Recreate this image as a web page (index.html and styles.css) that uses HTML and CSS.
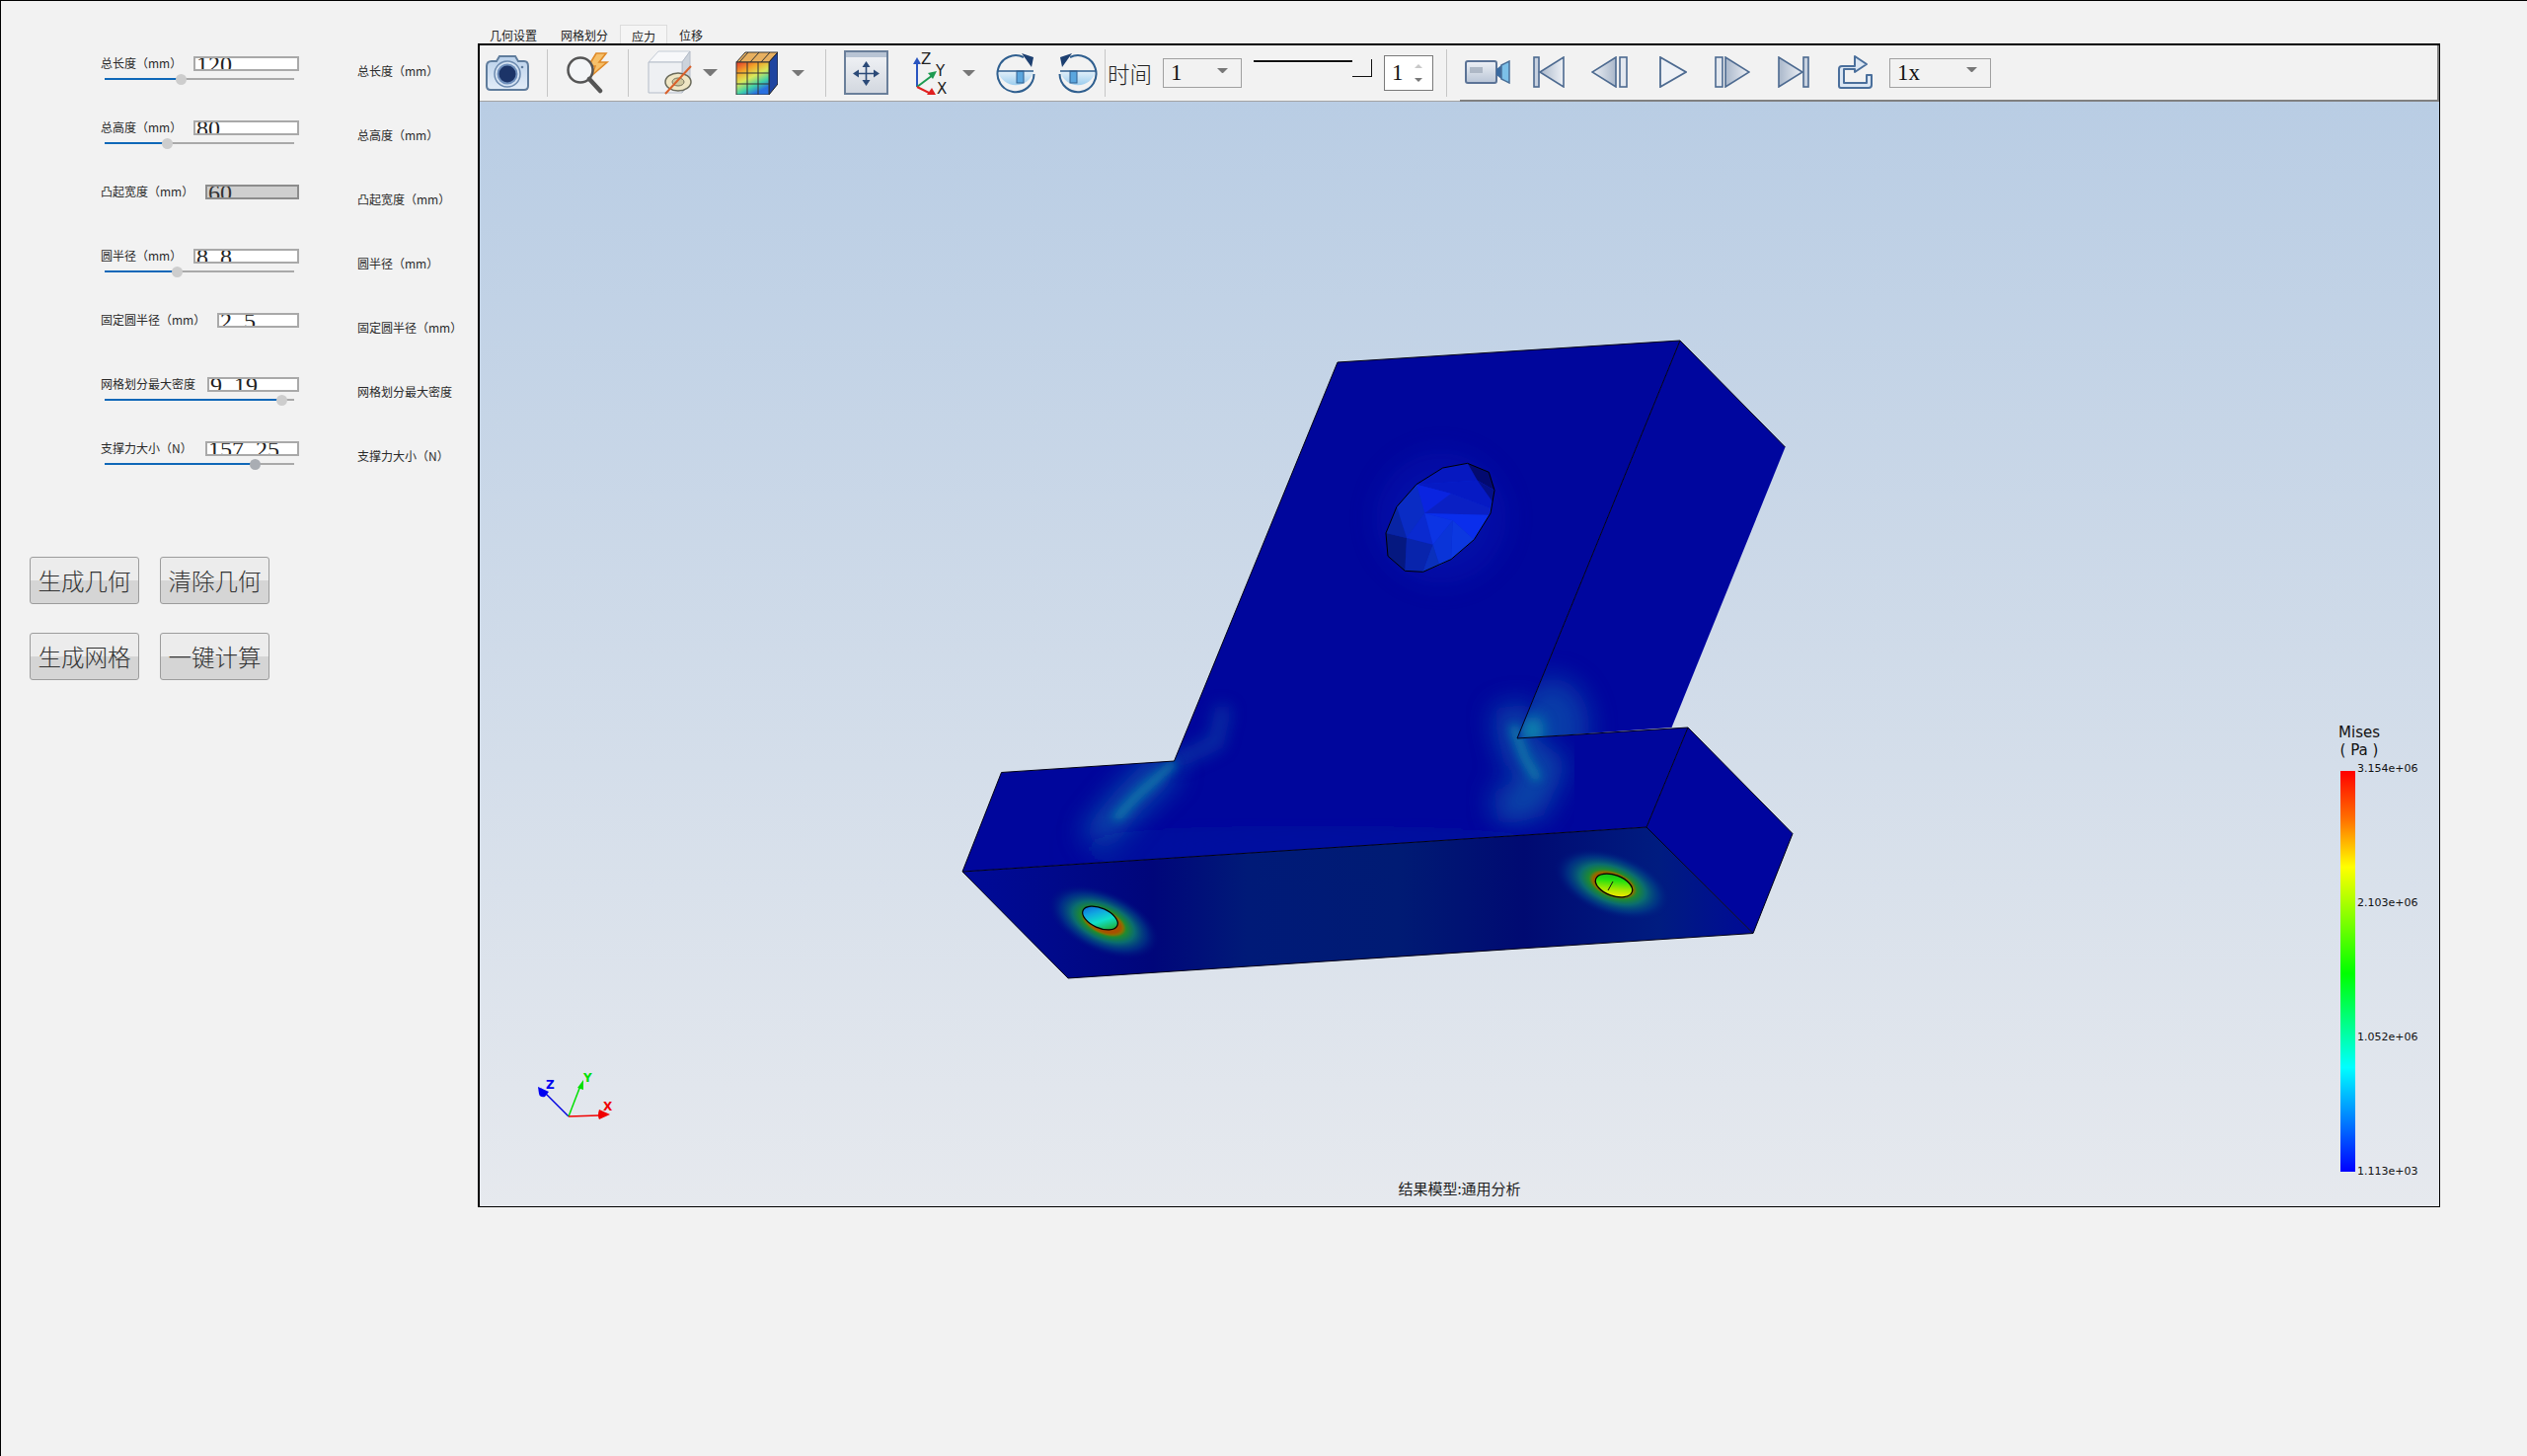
FILE: index.html
```html
<!DOCTYPE html>
<html lang="zh-CN">
<head>
<meta charset="utf-8">
<title>应力结果</title>
<link rel="stylesheet" href="styles.css">
</head>
<body>
<div class="app">
  <aside class="sidebar">
    <div class="param">
      <div class="ctl">
        <div class="ctl-head"><span class="lbl">总长度（mm）</span><div class="num w107">120</div></div>
        <div class="slider"><i class="fill" style="width:77px"></i><b class="thumb" style="left:77px"></b></div>
      </div>
      <span class="lbl side">总长度（mm）</span>
    </div>
    <div class="param">
      <div class="ctl">
        <div class="ctl-head"><span class="lbl">总高度（mm）</span><div class="num w107">80</div></div>
        <div class="slider"><i class="fill" style="width:63px"></i><b class="thumb" style="left:63px"></b></div>
      </div>
      <span class="lbl side">总高度（mm）</span>
    </div>
    <div class="param">
      <div class="ctl">
        <div class="ctl-head"><span class="lbl">凸起宽度（mm）</span><div class="num w95 off">60</div></div>
      </div>
      <span class="lbl side">凸起宽度（mm）</span>
    </div>
    <div class="param">
      <div class="ctl">
        <div class="ctl-head"><span class="lbl">圆半径（mm）</span><div class="num w107">8<span class="dot">.</span>8</div></div>
        <div class="slider"><i class="fill" style="width:73px"></i><b class="thumb" style="left:73px"></b></div>
      </div>
      <span class="lbl side">圆半径（mm）</span>
    </div>
    <div class="param">
      <div class="ctl">
        <div class="ctl-head"><span class="lbl">固定圆半径（mm）</span><div class="num w83">2<span class="dot">.</span>5</div></div>
      </div>
      <span class="lbl side">固定圆半径（mm）</span>
    </div>
    <div class="param">
      <div class="ctl">
        <div class="ctl-head"><span class="lbl">网格划分最大密度</span><div class="num w93">9<span class="dot">.</span>19</div></div>
        <div class="slider"><i class="fill" style="width:179px"></i><b class="thumb" style="left:179px"></b></div>
      </div>
      <span class="lbl side">网格划分最大密度</span>
    </div>
    <div class="param">
      <div class="ctl">
        <div class="ctl-head"><span class="lbl">支撑力大小（N）</span><div class="num w95">157<span class="dot">.</span>25</div></div>
        <div class="slider"><i class="fill" style="width:152px"></i><b class="thumb hot" style="left:152px"></b></div>
      </div>
      <span class="lbl side">支撑力大小（N）</span>
    </div>
    <div class="actions">
      <button class="btn">生成几何</button>
      <button class="btn">清除几何</button>
      <button class="btn">生成网格</button>
      <button class="btn">一键计算</button>
    </div>
  </aside>

  <main class="main">
    <nav class="tabs">
      <span class="tab">几何设置</span>
      <span class="tab">网格划分</span>
      <span class="tab on">应力</span>
      <span class="tab">位移</span>
    </nav>
    <section class="frame">
      <div class="bars">
        <div class="bar bar-a">
          <svg class="ml5" width="46" height="38" viewBox="0 0 46 38">
            <defs><linearGradient id="camB" x1="0" y1="0" x2="0" y2="1"><stop offset="0" stop-color="#b9d0ea"/><stop offset="1" stop-color="#e3edf8"/></linearGradient></defs>
            <path d="M2 12 Q2 7 7 7 H12 L15 2 H31 L34 7 H40 Q44 7 44 12 V32 Q44 36 40 36 H6 Q2 36 2 32 Z" fill="url(#camB)" stroke="#5f7c9c" stroke-width="2"/>
            <circle cx="23" cy="20" r="13" fill="#d5e3f3" stroke="#6d8bb0" stroke-width="1.5"/>
            <circle cx="23" cy="20" r="10.5" fill="#6f8fbb"/>
            <circle cx="23" cy="20" r="8.5" fill="#1c3468"/>
            <circle cx="38" cy="13" r="1.3" fill="#5f7c9c"/>
          </svg>
          <i class="sep ml17"></i>
          <svg class="ml18" width="47" height="43" viewBox="0 0 47 43">
            <path d="M31 2 L23 15 H30 L26 25 L42 11 H34 L41 2 Z" fill="#f6c069" stroke="#e08a28" stroke-width="1.6"/>
            <circle cx="15" cy="19" r="12.5" fill="#f3f5f7" stroke="#555" stroke-width="2.5"/>
            <path d="M24 28 L35 40" stroke="#555" stroke-width="4.5" stroke-linecap="round"/>
          </svg>
          <i class="sep ml16"></i>
          <svg class="ml18" width="47" height="45" viewBox="0 0 47 45">
            <path d="M2 12 L12 1 H44 L36 12 Z" fill="#f7f8fa" stroke="#c5ccd6"/>
            <path d="M36 12 L44 1 V33 L36 43 Z" fill="#ccd3dc" stroke="#b4bcc8"/>
            <path d="M2 12 H36 V43 H2 Z" fill="#eef0f3" stroke="#b4bcc8"/>
            <ellipse cx="32" cy="32" rx="13" ry="9" fill="#efe6c4" stroke="#6a6a5a" stroke-width="1.5"/>
            <ellipse cx="32" cy="32" rx="6" ry="4" fill="#cfc8a0" stroke="#77735c"/>
            <path d="M19 44 L45 16" stroke="#d9602a" stroke-width="2"/>
          </svg>
          <i class="drop ml10 wide"></i>
          <svg class="ml18" width="43" height="44" viewBox="0 0 43 44">
            <defs><linearGradient id="rb" x1="0" y1="0" x2="0.5" y2="1"><stop offset="0" stop-color="#e2362a"/><stop offset=".3" stop-color="#f2a52a"/><stop offset=".55" stop-color="#d8e85a"/><stop offset=".8" stop-color="#3fd0a8"/><stop offset="1" stop-color="#2a70e0"/></linearGradient></defs>
            <path d="M1 11 L10 1 H43 L34 11 Z" fill="#e8b060" stroke="#333"/>
            <path d="M34 11 L43 1 V33 L34 44 Z" fill="#1f45a0" stroke="#222"/>
            <rect x="1" y="11" width="33" height="33" fill="url(#rb)" stroke="#333"/>
            <path d="M12 11 V44 M23 11 V44 M1 22 H34 M1 33 H34 M13 1 L4 11 M24 1 L15 11 M35 1 L26 11" stroke="#333" fill="none"/>
          </svg>
          <i class="drop ml14"></i>
          <i class="sep ml21"></i>
          <svg class="ml18" width="45" height="45" viewBox="0 0 45 45">
            <defs><linearGradient id="fitB" x1="0" y1="0" x2="0" y2="1"><stop offset="0" stop-color="#f2f4f7"/><stop offset="1" stop-color="#d2d7df"/></linearGradient></defs>
            <rect x="1" y="1" width="43" height="43" fill="url(#fitB)" stroke="#6a7f9a" stroke-width="2"/>
            <rect x="2" y="2" width="41" height="5" fill="#b8c4d4"/>
            <path d="M22.5 14 V33 M12 23.5 H33" stroke="#2b4a78" stroke-width="1.6"/>
            <path d="M22.5 11 L18.5 17 H26.5 Z M22.5 36 L18.5 30 H26.5 Z M9 23.5 L15 19.5 V27.5 Z M36 23.5 L30 19.5 V27.5 Z" fill="#2b4a78"/>
          </svg>
          <svg class="ml25" width="35" height="44" viewBox="0 0 35 44">
            <path d="M4 36 V10" stroke="#2a55c0" stroke-width="2"/><path d="M4 6 L0 13 H8 Z" fill="#2a55c0"/>
            <path d="M4 36 L20 24" stroke="#1d9a50" stroke-width="2"/><path d="M24 20 L15 22 L20 28 Z" fill="#1d9a50"/>
            <path d="M4 36 L20 44" stroke="#e02020" stroke-width="2"/><path d="M23 44 L14 44 L19 37 Z" fill="#e02020"/>
            <text class="axis" x="8" y="13">Z</text><text class="axis" x="23" y="25">Y</text><text class="axis" x="24" y="43">X</text>
          </svg>
          <i class="drop ml15"></i>
          <svg class="ml21" width="40" height="42" viewBox="0 0 40 42">
            <defs><linearGradient id="sec" x1="0" y1="0" x2="0" y2="1"><stop offset="0" stop-color="#e4f1fa"/><stop offset="1" stop-color="#9ccdee"/></linearGradient></defs>
            <path d="M2 19 H38 A18.5 18.5 0 0 1 2 19 Z" fill="url(#sec)"/>
            <rect x="21" y="19" width="7" height="12" fill="#5aa6de" stroke="#2f5f8f"/>
            <path d="M2 19 H38" stroke="#2f5f8f" stroke-width="1.3"/>
            <path d="M28 5 A18.5 18.5 0 1 0 38.5 22" fill="none" stroke="#2f5f8f" stroke-width="2"/>
            <path d="M26 1 L38 5 L36 15 Z" fill="#1c3f70"/>
          </svg>
          <svg class="ml23" width="40" height="42" viewBox="0 0 40 42">
            <g transform="translate(40,0) scale(-1,1)">
              <path d="M2 19 H38 A18.5 18.5 0 0 1 2 19 Z" fill="url(#sec)"/>
              <rect x="21" y="19" width="7" height="12" fill="#5aa6de" stroke="#2f5f8f"/>
              <path d="M2 19 H38" stroke="#2f5f8f" stroke-width="1.3"/>
              <path d="M28 5 A18.5 18.5 0 1 0 38.5 22" fill="none" stroke="#2f5f8f" stroke-width="2"/>
              <path d="M26 1 L38 5 L36 15 Z" fill="#1c3f70"/>
            </g>
          </svg>
          <i class="sep ml7"></i>
          <span class="time ml2">时间</span>
          <div class="combo ml11 w80"><span>1</span><i class="drop"></i></div>
          <div class="range ml12"><i class="range-top"></i><i class="range-end"></i></div>
          <div class="spin ml12"><span>1</span><div class="spin-arrows"><i class="up"></i><i class="down"></i></div></div>
          <i class="sep ml13"></i>
        </div>
        <div class="bar bar-b">
          <svg class="ml5" width="46" height="24" viewBox="0 0 46 24">
            <defs><linearGradient id="med" x1="0" y1="0" x2="0" y2="1"><stop offset="0" stop-color="#eef1f6"/><stop offset="1" stop-color="#b9c5d6"/></linearGradient>
            <linearGradient id="medH" x1="0" y1="0" x2="1" y2="0"><stop offset="0" stop-color="#a9b7ca"/><stop offset="1" stop-color="#eef1f6"/></linearGradient>
            <linearGradient id="medR" x1="0" y1="0" x2="1" y2="0"><stop offset="0" stop-color="#eef1f6"/><stop offset="1" stop-color="#a9b7ca"/></linearGradient></defs>
            <rect x="1" y="1" width="31" height="22" rx="2" fill="url(#med)" stroke="#5b7396" stroke-width="2"/>
            <rect x="5" y="7" width="13" height="6" fill="#aeb8c6"/>
            <path d="M32 9 L37 5 V19 L32 15 Z" fill="#3a6aa0"/>
            <path d="M37 5 L45 1 V23 L37 19 Z" fill="#7cc0e8" stroke="#4a6f98" stroke-width="1.5"/>
          </svg>
          <svg class="ml23" width="32" height="32" viewBox="0 0 32 32">
            <rect x="1" y="1" width="5" height="30" fill="#c8d2e0" stroke="#4d6a90" stroke-width="1.6"/>
            <path d="M31 1 V31 L7 16 Z" fill="url(#medH)" stroke="#4d6a90" stroke-width="1.6"/>
          </svg>
          <svg class="ml27" width="37" height="32" viewBox="0 0 37 32">
            <path d="M25 1 V31 L1 16 Z" fill="url(#medR)" stroke="#4d6a90" stroke-width="1.6"/>
            <rect x="29" y="1" width="7" height="30" fill="#e3e8ef" stroke="#4d6a90" stroke-width="1.6"/>
          </svg>
          <svg class="ml32" width="28" height="32" viewBox="0 0 28 32">
            <path d="M1 1 V31 L27 16 Z" fill="#eef1f6" stroke="#4d6a90" stroke-width="1.8"/>
          </svg>
          <svg class="ml28" width="36" height="32" viewBox="0 0 36 32">
            <rect x="1" y="1" width="7" height="30" fill="#e3e8ef" stroke="#4d6a90" stroke-width="1.6"/>
            <path d="M11 1 V31 L35 16 Z" fill="url(#medH)" stroke="#4d6a90" stroke-width="1.6"/>
          </svg>
          <svg class="ml28" width="32" height="32" viewBox="0 0 32 32">
            <path d="M1 1 V31 L25 16 Z" fill="url(#medH)" stroke="#4d6a90" stroke-width="1.6"/>
            <rect x="26" y="1" width="5" height="30" fill="#c8d2e0" stroke="#4d6a90" stroke-width="1.6"/>
          </svg>
          <svg class="ml28" width="37" height="34" viewBox="0 0 37 34">
            <path d="M2 31 V14 Q2 11 5 11 H18 V6 L18 1 L30 9 L18 17 V14 H7 V28 H30 V20 H35 V30 Q35 33 32 33 H4 Q2 33 2 31 Z" fill="#dbe6f3" stroke="#4a6f9c" stroke-width="2" stroke-linejoin="round"/>
          </svg>
          <div class="combo ml16 w103"><span>1x</span><i class="drop"></i></div>
        </div>
      </div>

      <div class="view">
        <svg class="scene" width="1985" height="1119" viewBox="486 103 1985 1119">
          <defs>
            <clipPath id="cMain"><polygon points="1355,367 1702,345 1537,748 1710,737 1668,838 975,883 1014.5,782.5 1189.5,771"/></clipPath>
            <clipPath id="cRight"><polygon points="1702,345 1808.5,453 1693.5,737 1537,748"/></clipPath>
            <clipPath id="cBottom"><polygon points="975,883 1668,838 1776,945.5 1082,991"/></clipPath>
            <filter id="b14" x="-60%" y="-60%" width="220%" height="220%"><feGaussianBlur stdDeviation="14"/></filter>
            <filter id="b7" x="-60%" y="-60%" width="220%" height="220%"><feGaussianBlur stdDeviation="8"/></filter>
            <filter id="b4" x="-60%" y="-60%" width="220%" height="220%"><feGaussianBlur stdDeviation="5"/></filter>
            <linearGradient id="botG" gradientUnits="userSpaceOnUse" x1="975" y1="0" x2="1776" y2="0">
              <stop offset="0" stop-color="#000a98"/><stop offset=".12" stop-color="#00098a"/><stop offset=".24" stop-color="#00067a"/>
              <stop offset=".36" stop-color="#001a78"/><stop offset=".55" stop-color="#001b74"/><stop offset=".71" stop-color="#000a72"/>
              <stop offset=".88" stop-color="#001c80"/><stop offset="1" stop-color="#000a96"/>
            </linearGradient>
            <radialGradient id="hg">
              <stop offset=".3" stop-color="#a85000"/><stop offset=".35" stop-color="#8a7000"/><stop offset=".41" stop-color="#1f8a30"/>
              <stop offset=".56" stop-color="#0a6c70"/><stop offset=".78" stop-color="#004088" stop-opacity=".6"/><stop offset="1" stop-color="#001080" stop-opacity="0"/>
            </radialGradient>
            <linearGradient id="hL" x1="0" y1="0" x2="1" y2=".6"><stop offset="0" stop-color="#1050d8"/><stop offset=".4" stop-color="#10a8e0"/><stop offset=".68" stop-color="#10e0c8"/><stop offset="1" stop-color="#20b040"/></linearGradient>
            <linearGradient id="hR" x1=".1" y1="0" x2=".6" y2="1"><stop offset="0" stop-color="#14b020"/><stop offset=".35" stop-color="#22e010"/><stop offset=".7" stop-color="#a0e800"/><stop offset="1" stop-color="#f8e800"/></linearGradient>
          </defs>

          <polygon points="1355,367 1702,345 1537,748 1710,737 1668,838 975,883 1014.5,782.5 1189.5,771" fill="#00069c"/>
          <g clip-path="url(#cMain)">
            <polyline points="1184,772 1144,811 1108,855" fill="none" stroke="#0a60ae" stroke-width="34" opacity=".8" filter="url(#b14)"/>
            <polyline points="1240,715 1232,752 1190,772" fill="none" stroke="#0a50a8" stroke-width="16" opacity=".55" filter="url(#b7)"/>
            <polyline points="1190,772 1150,808 1130,830" fill="none" stroke="#0c80a8" stroke-width="9" opacity=".85" filter="url(#b4)"/>
            <polyline points="1530,715 1540,760 1565,778 1550,810 1515,820" fill="none" stroke="#0a58ac" stroke-width="38" opacity=".8" filter="url(#b14)"/>
            <polyline points="1533,735 1545,768 1558,790" fill="none" stroke="#0c80a8" stroke-width="9" opacity=".85" filter="url(#b4)"/>
            <ellipse cx="1330" cy="860" rx="240" ry="14" fill="#0018a0" filter="url(#b14)"/>
            <ellipse cx="1460" cy="525" rx="66" ry="66" fill="#0a20c0" opacity=".3" filter="url(#b14)"/>
          </g>
          <polygon points="1702,345 1808.5,453 1693.5,737 1537,748" fill="#00069e"/>
          <g clip-path="url(#cRight)">
            <ellipse cx="1572" cy="735" rx="38" ry="48" fill="#0a5aae" opacity=".65" filter="url(#b14)"/>
            <ellipse cx="1552" cy="740" rx="12" ry="15" fill="#109ab0" opacity=".85" filter="url(#b7)"/>
          </g>
          <polygon points="1710,737 1816,844.5 1776,945.5 1668,838" fill="#00059e"/>
          <polygon points="975,883 1668,838 1776,945.5 1082,991" fill="url(#botG)"/>
          <g clip-path="url(#cBottom)">
            <ellipse cx="1118" cy="934" rx="60" ry="31" transform="rotate(24 1118 934)" fill="url(#hg)"/>
            <ellipse cx="1634" cy="896" rx="62" ry="32" transform="rotate(20 1634 896)" fill="url(#hg)"/>
          </g>
          <ellipse cx="1114.5" cy="930" rx="19" ry="10" transform="rotate(24 1114.5 930)" fill="url(#hL)" stroke="#000" stroke-width="1.2"/>
          <ellipse cx="1635" cy="897" rx="19.5" ry="10.5" transform="rotate(20 1635 897)" fill="url(#hR)" stroke="#000" stroke-width="1.2"/>
          <path d="M1629 902 L1634 893" stroke="#111" fill="none"/>

          <g transform="translate(1380,450) scale(.33333)">
            <polygon points="245,72 320,58 385,85 402,140 390,210 340,290 270,350 185,388 130,385 78,340 72,270 105,190 165,122" fill="#0a28d4"/>
            <polygon points="245,72 320,58 350,110 165,122" fill="#0618c0"/>
            <polygon points="320,58 385,85 402,140 350,110" fill="#030a70"/>
            <polygon points="165,122 350,110 402,140 390,195 270,150" fill="#061ac4"/>
            <polygon points="350,110 402,140 396,175" fill="#04108a"/>
            <polygon points="165,122 270,150 190,210" fill="#0a24e0"/>
            <polygon points="270,150 390,195 385,215 190,210" fill="#0a20c4"/>
            <polygon points="190,210 385,215 340,290 275,232" fill="#0a2eec"/>
            <polygon points="105,190 165,122 190,210 135,285" fill="#0a2cc4"/>
            <polygon points="135,285 190,210 215,305" fill="#0a2ad0"/>
            <polygon points="190,210 275,232 215,305" fill="#0c34e4"/>
            <polygon points="275,232 340,290 270,350" fill="#0c38e0"/>
            <polygon points="215,305 275,232 270,350 235,368" fill="#0a34d8"/>
            <polygon points="72,270 105,190 135,285" fill="#0824a4"/>
            <polygon points="135,285 215,305 185,388 130,385" fill="#0824ac"/>
            <polygon points="215,305 235,368 185,388" fill="#0a30bc"/>
            <polygon points="72,270 135,285 130,385 78,340" fill="#051880"/>
            <polygon points="245,72 320,58 385,85 402,140 390,210 340,290 270,350 185,388 130,385 78,340 72,270 105,190 165,122" fill="none" stroke="#000" stroke-width="3"/>
          </g>

          <g fill="none" stroke="#000014" stroke-width="1">
            <polyline points="1014.5,782.5 1189.5,771 1355,367 1702,345 1808.5,453"/>
            <polyline points="1702,345 1537,748 1710,737 1816,844.5 1776,945.5 1082,991 975,883 1014.5,782.5"/>
            <polyline points="975,883 1668,838 1776,945.5"/>
            <line x1="1668" y1="838" x2="1710" y2="737"/>
          </g>

          <path d="M576 1131 L548 1103" stroke="#0000e0" stroke-width="1.5"/>
          <path d="M545 1101 L556 1106 L552 1111 Q547 1112 546 1108 Z" fill="#0000f0"/>
          <path d="M576 1131 L588 1100" stroke="#00e000" stroke-width="1.5"/>
          <path d="M591 1094 L591 1104 L585 1102 Z" fill="#00e000"/>
          <path d="M576 1131 L607 1130" stroke="#f00000" stroke-width="1.5"/>
          <path d="M618 1129 L607 1124 Q605 1130 607 1134 Z" fill="#f00000"/>
          <text class="tri tri-z" x="553" y="1103">Z</text>
          <text class="tri tri-y" x="591" y="1096">Y</text>
          <text class="tri tri-x" x="611" y="1125">X</text>
        </svg>

        <div class="legend">
          <div class="legend-title">Mises<br>( Pa )</div>
          <div class="legend-body">
            <div class="ramp"></div>
            <div class="ticks">
              <span>3.154e+06</span><span>2.103e+06</span><span>1.052e+06</span><span>1.113e+03</span>
            </div>
          </div>
        </div>
        <div class="caption">结果模型:通用分析</div>
      </div>
    </section>
  </main>
</div>
</body>
</html>
```
FILE: styles.css
```css
* { box-sizing: border-box; }
html, body { margin: 0; height: 100%; overflow: hidden; }
body {
  background: #f2f2f2;
  color: #222;
  font-family: "Noto Sans CJK SC", "Noto Sans", sans-serif;
  font-size: 12px;
}
.app {
  display: flex;
  height: 100vh;
  border-top: 1px solid #000;
  border-left: 1px solid #000;
}

/* sidebar */
.sidebar { width: 483px; flex: none; padding: 56px 0 0 101px; }
.param { display: flex; height: 65px; }
.ctl { width: 201px; flex: none; }
.ctl-head { display: flex; justify-content: space-between; height: 15px; }
.lbl { line-height: 14px; white-space: nowrap; color: #2a2a2a; }
.side { margin: 8px 0 0 59px; }
.num {
  height: 15px;
  padding-left: 1px;
  background: #fff;
  border: 2px solid #a9a9a9;
  overflow: hidden;
  font: 24px/12px "Liberation Serif", serif;
  color: #222;
  white-space: nowrap;
}
.num.off { background: #cfcfcf; border-color: #8c8c8c; color: #333; }
.dot { display: inline-block; width: 12px; }
.w107 { width: 107px; }
.w95 { width: 95px; }
.w93 { width: 93px; }
.w83 { width: 83px; }
.slider { position: relative; width: 192px; height: 2px; margin: 7px 0 0 4px; background: #a9a9a9; }
.fill { display: block; height: 2px; background: #0f68b8; }
.thumb {
  position: absolute;
  top: -4px;
  width: 11px;
  height: 11px;
  margin-left: -5px;
  border-radius: 50%;
  background: #cdcdcd;
}
.thumb.hot { background: #a9adb3; }
.actions {
  display: grid;
  grid-template-columns: 111px 111px;
  gap: 29px 21px;
  margin: 52px 0 0 -72px;
}
.btn {
  height: 48px;
  padding: 0;
  border: 1px solid #9c9c9c;
  border-radius: 3px;
  background: linear-gradient(#ececec 0 50%, #d5d5d5 50% 100%);
  color: #333;
  font: 300 23.5px/46px "Noto Sans CJK SC", sans-serif;
}

/* main */
.main { width: 1988px; flex: none; padding-top: 24px; }
.tabs { display: flex; height: 19px; }
.tab { padding: 0 12px; line-height: 22px; color: #222; }
.tab.on {
  width: 48px;
  background: #f5f5f5;
  border: 1px solid #dcdcdc;
  border-bottom: 0;
  padding: 0 11px;
  line-height: 21px;
}
.frame { height: 1179px; border-style: solid; border-color: #000; border-width: 2px 1px 1px 2px; display: flex; flex-direction: column; }
.bars { display: flex; height: 57px; flex: none; }
.bar { display: flex; align-items: center; height: 57px; padding-bottom: 1px; }
.bar-a { width: 993px; border-bottom: 1px solid #a3a3a3; }
.bar-b { flex: 1; border-bottom: 2px solid #808080; border-right: 2px solid #808080; }
.sep { display: block; width: 1px; height: 48px; background: #c6c6c6; flex: none; }
.bar svg { flex: none; display: block; }
.drop {
  display: block;
  flex: none;
  width: 13px;
  height: 0;
  border-style: solid;
  border-width: 6px 6.5px 0;
  border-color: #777 transparent transparent;
}
.drop.wide { width: 15px; border-width: 7px 7.5px 0; }
.axis { font: 15px "DejaVu Sans", sans-serif; fill: #222; }
.time { width: 45px; flex: none; font: 300 22.5px/30px "Noto Sans CJK SC", sans-serif; white-space: nowrap; color: #222; }
.combo {
  display: flex;
  align-items: center;
  justify-content: space-between;
  height: 30px;
  margin-top: 1px;
  flex: none;
  padding: 0 13px 0 7px;
  border: 1px solid #a0a0a0;
  font: 23px/28px "Liberation Serif", serif;
  color: #111;
}
.combo .drop { width: 11px; border-width: 5px 5.5px 0; margin-bottom: 6px; }
.w80 { width: 80px; }
.w103 { width: 103px; }
.range { position: relative; width: 120px; height: 18px; flex: none; margin-bottom: 9px; }
.range-top {
  position: absolute;
  left: 0; top: 1px;
  width: 100px; height: 2px;
  background: #111;
  box-shadow: 0 1px 0 #fff;
}
.range-end {
  position: absolute;
  right: 0; top: 0;
  width: 20px; height: 18px;
  border-right: 1.5px solid #111;
  border-bottom: 1.5px solid #111;
}
.spin {
  display: flex;
  align-items: center;
  justify-content: space-between;
  width: 50px;
  height: 36px;
  flex: none;
  padding: 0 10px 0 7px;
  background: #fff;
  border: 1px solid #7a7a7a;
  font: 23px/34px "Liberation Serif", serif;
  color: #111;
}
.spin-arrows { display: flex; flex-direction: column; gap: 10px; }
.spin-arrows i { display: block; width: 0; height: 0; border-style: solid; border-width: 0 4.5px; border-color: transparent; }
.spin-arrows .up { border-bottom: 4px solid #c8c8c8; }
.spin-arrows .down { border-top: 4px solid #777; }
.ml2 { margin-left: 2px; }
.ml5 { margin-left: 5px; }
.ml7 { margin-left: 7px; }
.ml10 { margin-left: 10px; }
.ml11 { margin-left: 11px; }
.ml12 { margin-left: 12px; }
.ml13 { margin-left: 13px; }
.ml14 { margin-left: 14px; }
.ml15 { margin-left: 15px; }
.ml16 { margin-left: 16px; }
.ml17 { margin-left: 17px; }
.ml18 { margin-left: 18px; }
.ml21 { margin-left: 21px; }
.ml23 { margin-left: 23px; }
.ml25 { margin-left: 25px; }
.ml27 { margin-left: 27px; }
.ml28 { margin-left: 28px; }
.ml32 { margin-left: 32px; }

/* 3D view */
.view {
  position: relative;
  flex: 1;
  background: linear-gradient(#b9cde4, #e6e9ee);
  overflow: hidden;
}
.scene { display: block; }
.tri { font: bold 12px "DejaVu Sans", sans-serif; }
.tri-x { fill: #f00000; }
.tri-y { fill: #00e000; }
.tri-z { fill: #0000f0; }
.legend { position: absolute; left: 1883px; top: 630px; width: 120px; }
.legend-title {
  width: 46px;
  margin-left: -2px;
  font: 15px/18px "DejaVu Sans", sans-serif;
  text-align: center;
  color: #111;
}
.legend-body { display: flex; height: 422px; margin-top: 3px; }
.ramp {
  width: 15px;
  height: 406px;
  margin: 9px 2px 0 2px;
  background: linear-gradient(#ff0000 0, #ff7000 12%, #ffff00 24%, #00ff00 50.5%, #00ffff 74%, #0080ff 87%, #0000ff 100%);
}
.ticks {
  display: flex;
  flex-direction: column;
  justify-content: space-between;
  font: 11px/14px "DejaVu Sans", sans-serif;
  color: #111;
}
.caption {
  position: absolute;
  left: 0; right: 0; bottom: 9px;
  text-align: center;
  font-size: 15px;
  line-height: 18px;
  color: #222;
}
```
